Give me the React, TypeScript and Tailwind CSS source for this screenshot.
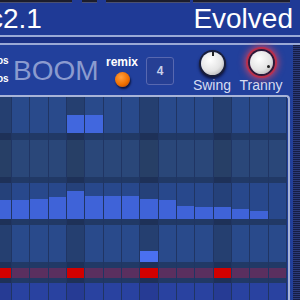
import type { ReactNode } from 'react';

const ACCENT = [0, 4, 8, 12];
// bar heights in the velocity lane, one per step
const BARS = [19, 19, 20, 22, 28, 23, 23, 23, 20, 19, 13, 12, 12, 10, 8, 0];

function GridRow({
  h,
  cell,
  accentCell,
  content,
}: {
  h: string;
  cell: string;
  accentCell: string;
  content?: (i: number) => ReactNode;
}) {
  return (
    <div className={`grid grid-cols-16 w-[293.33px] -ml-[6.33px] shrink-0 ${h}`}>
      {Array.from({ length: 16 }).map((_, i) => (
        <div
          key={i}
          className={`flex flex-col justify-end border-r border-[#203563] ${ACCENT.includes(i) ? accentCell : cell}`}
        >
          {content?.(i)}
        </div>
      ))}
    </div>
  );
}

function Knob({ glow, tick }: { glow?: boolean; tick: 'top' | 'br' }) {
  return (
    <div
      className={`relative w-[23px] h-[23px] rounded-full bg-[radial-gradient(circle_at_40%_35%,#ffffff,#e4e4e4_55%,#9a9a9a)] ${
        glow
          ? 'shadow-[0_0_0_2px_#2a1a3a,0_0_0_4px_#b8304e,0_0_7px_5px_#c84466]'
          : 'shadow-[0_0_0_2px_#1a1f3a,0_2px_3px_2px_#0e1440]'
      }`}
    >
      {tick === 'top' ? (
        <div className="absolute left-[11px] top-[0px] w-[2px] h-[4px] bg-[#222]" />
      ) : (
        <div className="absolute left-[17px] top-[14px] w-[3px] h-[3px] rounded-full bg-[#222]" />
      )}
    </div>
  );
}

export default function App() {
  return (
    <div className="w-[300px] h-[300px] overflow-hidden flex flex-col bg-[#1f3a96] font-['Liberation_Sans',Arial,sans-serif]">
      {/* Title bar */}
      <div className="h-[35px] shrink-0 flex flex-col">
        <div className="flex h-[3px]">
          <div className="w-[72px] bg-[#1c1d2c] border-b border-[#4b5070]" />
          <div className="ml-[10px] w-[15px] bg-[#1c1d2c] border-b border-[#4b5070]" />
          <div className="ml-[9px] w-[84px] bg-[#1c1d2c] border-b border-[#4b5070]" />
          <div className="ml-[3px] w-[97px] bg-[#1c1d2c] border-b border-[#4b5070]" />
        </div>
        <div className="flex justify-between items-start mt-[2px]">
          <span className="-ml-[11px] text-[28px] leading-none text-white">c2.1</span>
          <span className="mr-[7px] text-[28px] leading-none text-white">Evolved</span>
        </div>
      </div>
      <div className="h-[2px] shrink-0 bg-[#9aa9d6]" />
      <div className="h-[6px] shrink-0 bg-[#1b3186]" />
      <div className="h-[2px] shrink-0 bg-[#9aa9d6]" />

      <div className="flex flex-1 min-h-0">
        <div className="flex-1 flex flex-col bg-[#22409c] min-w-0">
          {/* Controls */}
          <div className="h-[50px] shrink-0 flex items-start">
            <div className="-ml-[3px] w-[11px] mt-[11px] flex flex-col gap-[8px] text-[10px] leading-none font-bold text-white">
              <span>os</span>
              <span>os</span>
            </div>
            <div className="ml-[5px] w-[93px] mt-[12px] text-[28px] leading-none text-[#8b9bcf]">BOOM</div>
            <div className="w-[40px] mt-[11px] flex flex-col">
              <span className="text-[12px] leading-none font-bold text-white">remix</span>
              <div className="ml-[9px] mt-[4px] w-[15px] h-[15px] rounded-full bg-[radial-gradient(circle_at_40%_35%,#ffa040,#f07000_55%,#a83c00)] shadow-[1px_2px_2px_#0c1540]" />
            </div>
            <div className="w-[28px] h-[28px] mt-[12px] rounded-[3px] border border-[#5868b0] bg-[#263f94] flex items-center justify-center text-[12px] font-bold text-[#c8d0ea]">
              4
            </div>
            <div className="ml-[16px] w-[44px] mt-[7px] flex flex-col items-center">
              <Knob tick="top" />
              <span className="mt-[3px] text-[14px] leading-none text-[#d6dcf2]">Swing</span>
            </div>
            <div className="ml-[4px] w-[46px] mt-[6px] flex flex-col items-center">
              <Knob glow tick="br" />
              <span className="mt-[4px] text-[14px] leading-none text-[#d6dcf2]">Tranny</span>
            </div>
          </div>

          {/* Step grid */}
          <div className="flex-1 mr-[3px] border-t-2 border-r-2 border-[#a8b4d8] rounded-tr-[4px] overflow-hidden flex flex-col">
            <GridRow
              h="h-[36px]"
              cell="bg-[#294a8b]"
              accentCell="bg-[#253f70]"
              content={(i) => (i === 4 || i === 5 ? <div className="h-[18px] bg-[#4167de]" /> : null)}
            />
            <GridRow h="h-[7px]" cell="bg-[#213966]" accentCell="bg-[#1e3158]" />
            <GridRow h="h-[37px]" cell="bg-[#2a4779]" accentCell="bg-[#273f66]" />
            <GridRow h="h-[6px]" cell="bg-[#213966]" accentCell="bg-[#1e3158]" />
            <GridRow
              h="h-[36px]"
              cell="bg-[#28488c]"
              accentCell="bg-[#25417a]"
              content={(i) => (BARS[i] ? <div className="bg-[#3f63d8]" style={{ height: BARS[i] }} /> : null)}
            />
            <GridRow h="h-[6px]" cell="bg-[#213966]" accentCell="bg-[#1e3158]" />
            <GridRow
              h="h-[37px]"
              cell="bg-[#294a8b]"
              accentCell="bg-[#253f70]"
              content={(i) => (i === 8 ? <div className="h-[11px] bg-[#4a70f0]" /> : null)}
            />
            <GridRow h="h-[6px]" cell="bg-[#213966]" accentCell="bg-[#1e3158]" />
            <GridRow h="h-[10px]" cell="bg-[#5a2f5f]" accentCell="bg-[#d20000]" />
            <GridRow h="h-[5px]" cell="bg-[#213966]" accentCell="bg-[#1e3158]" />
            <GridRow h="h-[30px]" cell="bg-[#2942a0]" accentCell="bg-[#263b94]" />
          </div>
        </div>
        <div className="w-[7px] shrink-0 bg-[repeating-linear-gradient(to_bottom,#151d46_0px,#151d46_1px,#2b3a78_1px,#2b3a78_2px)]" />
      </div>
    </div>
  );
}
